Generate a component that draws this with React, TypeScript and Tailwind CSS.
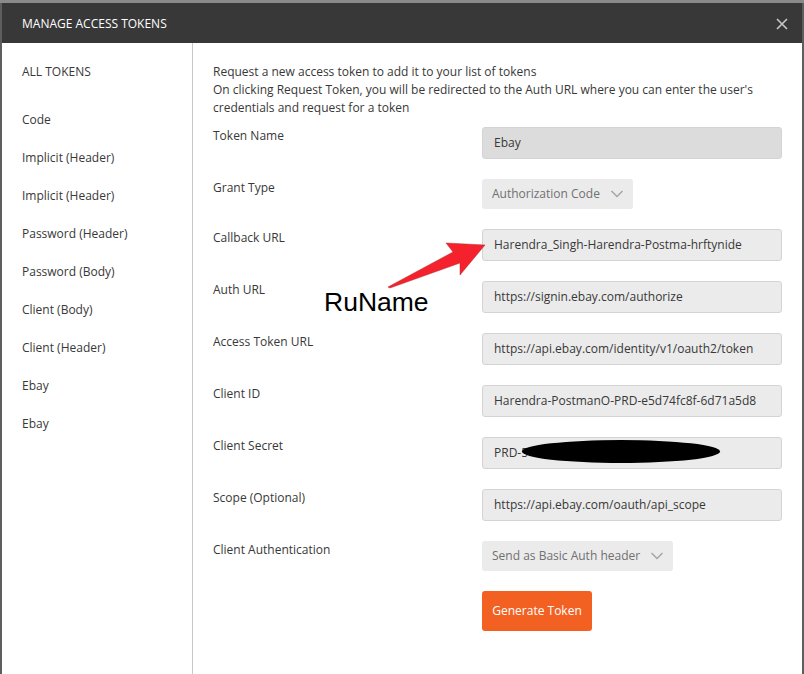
const tokens = ["Code", "Implicit (Header)", "Implicit (Header)", "Password (Header)", "Password (Body)", "Client (Body)", "Client (Header)", "Ebay", "Ebay"];

function Field({ label, value, dark }: { label: string; value: string; dark?: boolean }) {
  return (
    <div className="flex h-[52px] items-start">
      <div className="w-[269px] leading-[18px]">{label}</div>
      <div className={`flex h-[32px] w-[300px] items-center rounded-[3px] border border-[#d4d4d4] pl-[11px] ${dark ? "bg-[#dcdcdc]" : "bg-[#ebebeb]"}`}>
        {value}
      </div>
    </div>
  );
}

function Select({ label, value, width }: { label: string; value: string; width: string }) {
  return (
    <div className="flex h-[50px] items-start">
      <div className="w-[269px] leading-[18px]">{label}</div>
      <div className={`flex h-[30px] items-center justify-between rounded-[3px] bg-[#ebebeb] pl-[10px] pr-[9px] text-[#707070] ${width}`}>
        <span>{value}</span>
        <svg width="14" height="8" viewBox="0 0 14 8" fill="none" stroke="#a6a6a6" strokeWidth="1.5"><path d="M1.5 1l5.5 5.5L12.5 1" /></svg>
      </div>
    </div>
  );
}

export default function App() {
  return (
    <div className="relative h-[674px] w-[804px] overflow-hidden border-t-[3px] border-[#8a8a8a] bg-[#5e5e5e] px-[2px] font-['Open_Sans',sans-serif] text-[12px] text-[#383838]">
      <div className="flex h-[671px] flex-col bg-white">
        <div className="flex h-[40px] shrink-0 items-center justify-between bg-[#383838] pl-[20px] pr-[14px] pt-[1px] text-white">
          <span>MANAGE ACCESS TOKENS</span>
          <svg width="12" height="12" viewBox="0 0 12 12" stroke="#c4c4c4" strokeWidth="1.7"><path d="M1 1l10 10M11 1L1 11" /></svg>
        </div>
        <div className="flex min-h-0 flex-1">
          <div className="w-[191px] shrink-0 border-r border-[#c8c8c8] pl-[20px] pt-[20px]">
            <div className="mb-[20px] h-[18px] leading-[18px]">ALL TOKENS</div>
            {tokens.map((t, i) => (
              <div key={i} className="h-[38px] pt-[10px] leading-[18px]">{t}</div>
            ))}
          </div>
          <div className="flex-1 pl-[20px] pt-[20px]">
            <p className="h-[64px] w-[560px] leading-[18px]">
              Request a new access token to add it to your list of tokens<br />
              On clicking Request Token, you will be redirected to the Auth URL where you can enter the user's<br />
              credentials and request for a token
            </p>
            <Field label="Token Name" value="Ebay" dark />
            <Select label="Grant Type" value="Authorization Code" width="w-[151px]" />
            <Field label="Callback URL" value="Harendra_Singh-Harendra-Postma-hrftynide" />
            <Field label="Auth URL" value="https://signin.ebay.com/authorize" />
            <Field label="Access Token URL" value="https://api.ebay.com/identity/v1/oauth2/token" />
            <Field label="Client ID" value="Harendra-PostmanO-PRD-e5d74fc8f-6d71a5d8" />
            <Field label="Client Secret" value="PRD-5" />
            <Field label="Scope (Optional)" value="https://api.ebay.com/oauth/api_scope" />
            <Select label="Client Authentication" value="Send as Basic Auth header" width="w-[191px]" />
            <button className="ml-[269px] h-[40px] w-[110px] rounded-[3px] bg-[#f26122] font-medium text-white">Generate Token</button>
          </div>
        </div>
      </div>
      <svg className="absolute left-0 top-[-3px]" width="804" height="674" viewBox="0 0 804 674">
        <polygon points="485,245 446,243 453,252 388,287 390,288 460,263 460,275" fill="#f5222d" stroke="#a33" strokeWidth="0.5" />
        <ellipse cx="621" cy="451.5" rx="99" ry="11.5" fill="#000" />
      </svg>
      <div className="absolute left-[324px] top-[284px] font-['Liberation_Sans',sans-serif] text-[26.5px] leading-[30px] text-black">RuName</div>
    </div>
  );
}
